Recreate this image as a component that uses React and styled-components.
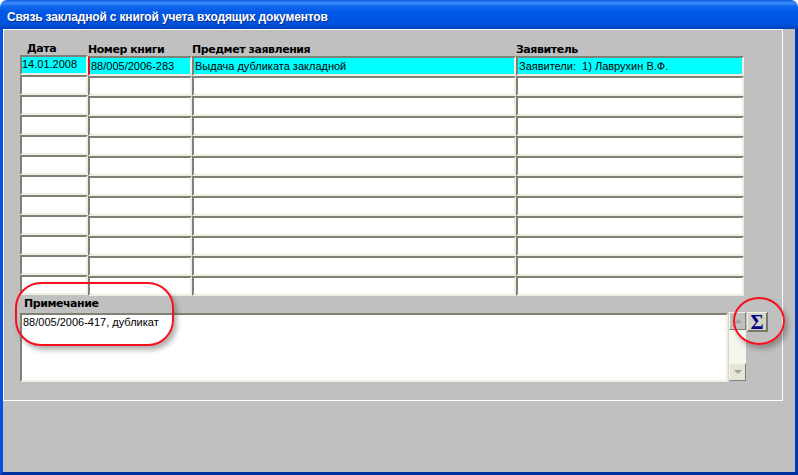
import React from 'react';
import styled, { createGlobalStyle } from 'styled-components';

const GlobalStyle = createGlobalStyle`
	html, body {
		margin: 0;
		padding: 0;
		background: #fff;
	}
	body {
		width: 798px;
		height: 475px;
		overflow: hidden;
		font-family: 'Liberation Sans', Arial, sans-serif;
	}
`;

const Window = styled.div`
	position: relative;
	width: 798px;
	height: 475px;
	display: flex;
	flex-direction: column;
	border-radius: 7px 7px 0 0;
	overflow: hidden;
`;

const TitleBar = styled.div`
	height: 29px;
	box-sizing: border-box;
	padding: 4px 0 0 7px;
	display: flex;
	align-items: center;
	background: linear-gradient(180deg, #0a5ae0 0, #3c8ef8 3px, #1268ee 6px, #0058e6 12px, #0055e2 22px, #0048cc 27px, #003fb8 29px);
	color: #fff;
	font: bold 12px 'Liberation Sans', Arial, sans-serif;
	letter-spacing: -0.16px;
	text-shadow: 1px 1px 0 #0a2f8c;
`;

const Frame = styled.div`
	flex: 1;
	display: flex;
	flex-direction: column;
	background: #c0c0c0;
	border-left: 3px solid #0a50e0;
	border-right: 3px solid #0038b0;
	border-bottom: 3px solid #0030a0;
`;

const Panel = styled.div`
	width: 780px;
	height: 372px;
	box-sizing: border-box;
	border: 1px solid #fff;
	padding: 13px 0 0 16px;
`;

const Grid = styled.div`
	display: grid;
	grid-template-columns: 68px 104px 324px 228px;
	grid-auto-rows: 20px;
	width: 724px;
`;

const HeaderRow = styled(Grid)`
	grid-auto-rows: 13px;
`;

const HeaderLabel = styled.div`
	padding-left: ${({ $indent }) => $indent || 0}px;
	margin-top: ${({ $up }) => ($up ? -1 : 0)}px;
	font: bold 11px/13px 'DejaVu Sans', Verdana, sans-serif;
	letter-spacing: -0.45px;
	color: #000;
	white-space: nowrap;
`;

const Cell = styled.div`
	box-sizing: border-box;
	height: 20px;
	margin-top: ${({ $up }) => ($up ? -1 : 0)}px;
	padding: ${({ $up }) => ($up ? 0 : 1)}px 0 0 ${({ $up }) => ($up ? 0 : 1)}px;
	border-style: solid;
	border-width: 2px;
	border-color: #808074 #f0eee2 #f0eee2 #808074;
	background: ${({ $active }) => ($active ? '#00ffff' : '#fff')};
	font: 11px/14px 'Liberation Sans', Arial, sans-serif;
	color: #000;
	white-space: pre;
	overflow: hidden;
`;

const BookCell = styled(Cell)`
	border-left-color: ${({ $active }) => ($active ? '#e01020' : '#808074')};
`;

const NoteLabel = styled.div`
	height: 17px;
	padding-left: 4px;
	font: bold 11px/15px 'DejaVu Sans', Verdana, sans-serif;
	letter-spacing: -0.45px;
	color: #000;
`;

const NoteRow = styled.div`
	display: flex;
	align-items: flex-start;
`;

const NoteBox = styled.div`
	box-sizing: border-box;
	width: 708px;
	height: 69px;
	padding: 0 0 0 1px;
	border-style: solid;
	border-width: 2px;
	border-color: #808074 #f0eee2 #f0eee2 #808074;
	background: #fff;
	font: 11px/14px 'Liberation Sans', Arial, sans-serif;
	color: #000;
`;

const ScrollBar = styled.div`
	width: 18px;
	height: 69px;
	margin-top: -1px;
	display: flex;
	flex-direction: column;
	justify-content: space-between;
	background: #f6f5ee;
	border-left: 1px solid #d8d6c8;
	box-sizing: border-box;
`;

const ScrollButton = styled.div`
	height: 16px;
	display: flex;
	align-items: center;
	justify-content: center;
	background: ${({ $muted }) => ($muted ? '#c0c0c0' : '#e6e4d6')};
	border-style: solid;
	border-width: 1px;
	border-color: #f4f3ea #808074 #808074 #f4f3ea;
`;

const Arrow = styled.div`
	width: 0;
	height: 0;
	border-left: 4px solid transparent;
	border-right: 4px solid transparent;
	border-${({ $down }) => ($down ? 'top' : 'bottom')}: 4px solid #a2a294;
`;

const SumButton = styled.div`
	box-sizing: border-box;
	width: 21px;
	height: 20px;
	margin: -1px 0 0 1px;
	display: flex;
	align-items: center;
	justify-content: center;
	background: #d4d2c4;
	border-style: solid;
	border-width: 1px 2px 2px 1px;
	border-color: #f4f3ea #77776a #77776a #f4f3ea;
	font: bold 20px/18px 'Liberation Serif', 'Times New Roman', serif;
	color: #000088;
`;

const Callout = styled.div`
	position: absolute;
	left: ${({ $x }) => $x}px;
	top: ${({ $y }) => $y}px;
	width: ${({ $w }) => $w}px;
	height: ${({ $h }) => $h}px;
	box-sizing: border-box;
	border: 2px solid #f8101c;
	border-radius: ${({ $r }) => $r};
	box-shadow: 3px 4px 5px rgba(60, 60, 60, 0.4);
`;

const rows = Array.from({ length: 12 }, (_, i) => i);

const App = () => (
	<>
		<GlobalStyle />
		<Window>
			<TitleBar>Связь закладной с книгой учета входящих документов</TitleBar>
			<Frame>
				<Panel>
					<HeaderRow>
						<HeaderLabel $indent={7} $up>Дата</HeaderLabel>
						<HeaderLabel>Номер книги</HeaderLabel>
						<HeaderLabel>Предмет заявления</HeaderLabel>
						<HeaderLabel>Заявитель</HeaderLabel>
					</HeaderRow>
					<Grid>
						{rows.map((i) => {
							const active = i === 0;
							return (
								<React.Fragment key={i}>
									<Cell $active={active} $up>{active && '14.01.2008'}</Cell>
									<BookCell $active={active}>{active && '88/005/2006-283'}</BookCell>
									<Cell $active={active}>{active && 'Выдача дубликата закладной'}</Cell>
									<Cell $active={active}>{active && 'Заявители:  1) Лаврухин В.Ф.'}</Cell>
								</React.Fragment>
							);
						})}
					</Grid>
					<NoteLabel>Примечание</NoteLabel>
					<NoteRow>
						<NoteBox>88/005/2006-417, дубликат</NoteBox>
						<ScrollBar>
							<ScrollButton $muted><Arrow /></ScrollButton>
							<ScrollButton><Arrow $down /></ScrollButton>
						</ScrollBar>
						<SumButton>Σ</SumButton>
					</NoteRow>
				</Panel>
			</Frame>
			<Callout $x={15} $y={282} $w={159} $h={64} $r="26px" />
			<Callout $x={733} $y={297} $w={52} $h={48} $r="50%" />
		</Window>
	</>
);

export default App;
